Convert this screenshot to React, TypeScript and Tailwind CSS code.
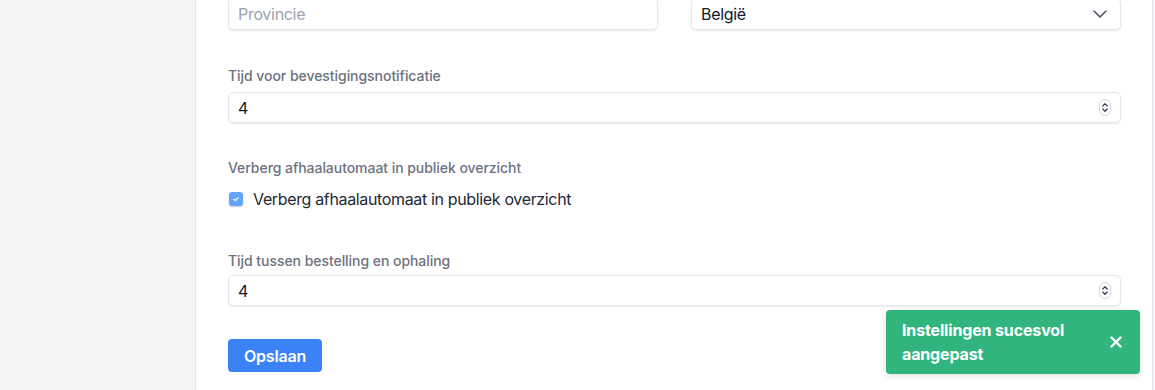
import React from "react";

function Spinner() {
  return (
    <svg width="12" height="17" viewBox="0 0 12 17" className="shrink-0">
      <rect x="0.5" y="0.5" width="11" height="16" rx="5.5" fill="#fff" stroke="#d1d5db" />
      <path d="M3.8 7 L6 4.8 L8.2 7" fill="none" stroke="#374151" strokeWidth="1.3" strokeLinecap="round" strokeLinejoin="round" />
      <path d="M3.8 10 L6 12.2 L8.2 10" fill="none" stroke="#374151" strokeWidth="1.3" strokeLinecap="round" strokeLinejoin="round" />
    </svg>
  );
}

function NumberField({ value }: { value: string }) {
  return (
    <div className="flex h-[31px] w-full items-center justify-between rounded-[5px] border border-[#e5e7eb] bg-white pl-[9px] pr-[9px] shadow-[0_1px_2px_rgba(0,0,0,0.08)]">
      <span className="text-[16px] text-[#111827]">{value}</span>
      <Spinner />
    </div>
  );
}

function Label({ children }: { children: React.ReactNode }) {
  return <div className="text-[14px] leading-[20px] font-medium tracking-[-0.05px] text-[#6b7280]">{children}</div>;
}

export default function App() {
  return (
    <div className="relative flex h-[390px] w-[1155px] overflow-hidden bg-[#f3f4f6]" style={{ fontFamily: "Inter, 'Noto Sans', sans-serif" }}>
      <div className="w-[196px] shrink-0 border-r border-[#e5e7eb] bg-[#f3f4f6]" />
      <div className="flex w-[957px] shrink-0 flex-col border-r border-[#e5e7eb] bg-white pl-[32px] pr-[31px]">
        <div className="mt-[-2px] grid grid-cols-2 gap-[33px]">
          <div className="flex h-[32px] items-center rounded-[5px] border border-[#e5e7eb] bg-white px-[9px] shadow-[0_1px_2px_rgba(0,0,0,0.08)]">
            <span className="text-[16px] tracking-[-0.3px] text-[#9ca3af]">Provincie</span>
          </div>
          <div className="flex h-[32px] items-center justify-between rounded-[5px] border border-[#e5e7eb] bg-white pl-[9px] pr-[12px] shadow-[0_1px_2px_rgba(0,0,0,0.08)]">
            <span className="text-[16px] tracking-[-0.3px] text-[#111827]">België</span>
            <svg width="16" height="16" viewBox="0 0 16 16">
              <path d="M2 5 L8 11 L14 5" fill="none" stroke="#4b5563" strokeWidth="1.6" strokeLinecap="round" strokeLinejoin="round" />
            </svg>
          </div>
        </div>

        <div className="mt-[36px]">
          <Label>Tijd voor bevestigingsnotificatie</Label>
        </div>
        <div className="mt-[6px]">
          <NumberField value="4" />
        </div>

        <div className="mt-[35px]">
          <Label>Verberg afhaalautomaat in publiek overzicht</Label>
        </div>
        <div className="mt-[9px] flex h-[24px] items-center gap-[10px] pl-[1px]">
          <span className="flex h-[14px] w-[14px] items-center justify-center rounded-[3px] bg-[#60a5fa] shadow-[0_1px_2px_rgba(0,0,0,0.2)]">
            <svg width="10" height="10" viewBox="0 0 10 10">
              <path d="M2.8 5.2 L4.3 6.6 L7.2 3.6" fill="none" stroke="#fff" strokeWidth="1.3" strokeLinecap="round" strokeLinejoin="round" />
            </svg>
          </span>
          <span className="text-[16px] tracking-[-0.35px] text-[#1f2937]">Verberg afhaalautomaat in publiek overzicht</span>
        </div>

        <div className="mt-[40px]">
          <Label>Tijd tussen bestelling en ophaling</Label>
        </div>
        <div className="mt-[4px]">
          <NumberField value="4" />
        </div>

        <div className="mt-[33px]">
          <button className="h-[33px] w-[94px] rounded-[4px] bg-[#3b82f6] text-[16px] font-semibold tracking-[-0.2px] text-white">Opslaan</button>
        </div>
      </div>

      <div className="absolute left-[886px] top-[310px] flex h-[64px] w-[254px] items-center justify-between rounded-[4px] bg-[#31b57c] pl-[16px] pr-[18px] shadow-[0_2px_6px_rgba(0,0,0,0.12)]">
        <div className="text-[16px] leading-[24px] font-bold tracking-[-0.15px] text-white">
          Instellingen sucesvol
          <br />
          aangepast
        </div>
        <svg width="12" height="12" viewBox="0 0 12 12">
          <path d="M1.5 1.5 L10.5 10.5 M10.5 1.5 L1.5 10.5" stroke="#fff" strokeWidth="2.4" strokeLinecap="round" />
        </svg>
      </div>
    </div>
  );
}
